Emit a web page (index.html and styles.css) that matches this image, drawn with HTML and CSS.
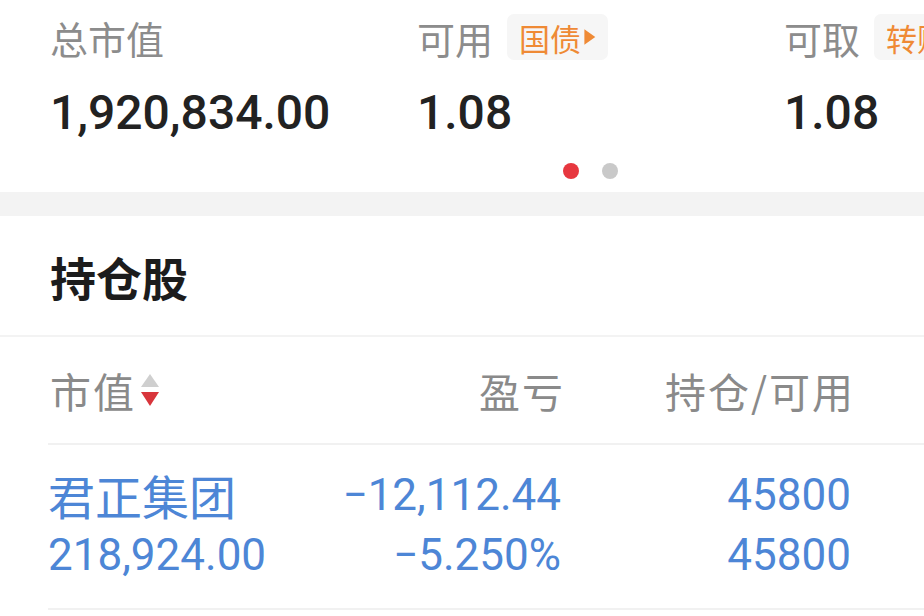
FILE: index.html
```html
<!DOCTYPE html>
<html lang="zh-CN">
<head>
  <meta charset="UTF-8" />
  <meta name="viewport" content="width=device-width, initial-scale=1.0"/>
  <title>持仓</title>
  <link rel="stylesheet" href="styles.css">
</head>
<body>
  <section class="summary">
    <div class="summary-track">
      <div class="summary-item">
        <div class="summary-label"><span>总市值</span></div>
        <div class="summary-value">1,920,834.00</div>
      </div>
      <div class="summary-item">
        <div class="summary-label">
          <span>可用</span>
          <span class="tag">国债<svg class="tag-arrow" viewBox="0 0 10 14" width="13" height="18"><path d="M1 1 L9.5 7 L1 13 Z" fill="#ef8a35"/></svg></span>
        </div>
        <div class="summary-value">1.08</div>
      </div>
      <div class="summary-item">
        <div class="summary-label">
          <span>可取</span>
          <span class="tag">转账<svg class="tag-arrow" viewBox="0 0 10 14" width="13" height="18"><path d="M1 1 L9.5 7 L1 13 Z" fill="#ef8a35"/></svg></span>
        </div>
        <div class="summary-value">1.08</div>
      </div>
    </div>
    <div class="pager">
      <span class="dot on"></span>
      <span class="dot"></span>
    </div>
  </section>

  <div class="band"></div>

  <section class="holdings">
    <h2 class="holdings-title">持仓股</h2>

    <div class="grid head">
      <div class="cell left">市值
        <svg class="sort" viewBox="0 0 20 40" width="20" height="40">
          <path d="M10 4 L19 17 L1 17 Z" fill="#cfcfcf"/>
          <path d="M1 22 L19 22 L10 36 Z" fill="#d8353b"/>
        </svg>
      </div>
      <div class="cell">盈亏</div>
      <div class="cell">持仓/可用</div>
    </div>

    <div class="grid row">
      <div class="cell left">
        <div class="name">君正集团</div>
        <div class="num">218,924.00</div>
      </div>
      <div class="cell">
        <div class="num">−12,112.44</div>
        <div class="num">−5.250%</div>
      </div>
      <div class="cell">
        <div class="num">45800</div>
        <div class="num">45800</div>
      </div>
    </div>
  </section>
</body>
</html>
```

FILE: styles.css
```css
body { margin: 0; background: #fff; font-family: Roboto, "Noto Sans CJK SC", sans-serif; overflow: hidden; }

.summary { height: 192px; overflow: hidden; }
.summary-track { display: flex; padding: 14px 0 0 50px; white-space: nowrap; }
.summary-item { flex: 0 0 367px; }
.summary-label { display: flex; align-items: center; height: 46px; font-family: "Noto Sans CJK SC", sans-serif; font-size: 38px; color: #8c8c8c; }
.tag { display: flex; align-items: center; height: 46px; margin-left: 14px; padding: 0 12px 0 12px; background: #f6f6f6; border-radius: 7px; font-size: 31px; color: #ef8a35; }
.tag-arrow { margin-left: 2px; }
.summary-value { margin-top: 24px; font-size: 48px; font-weight: 500; line-height: 58px; color: #222; }

.pager { display: flex; gap: 23px; padding: 21px 0 0 563px; }
.dot { width: 16px; height: 16px; border-radius: 50%; background: #c9c9c9; }
.dot.on { background: #e7373f; }

.band { height: 24px; background: #f3f3f3; }

.holdings-title { margin: 0; height: 119px; display: flex; align-items: center; padding-left: 50px; border-bottom: 2px solid #f3f3f3; font-family: "Noto Sans CJK SC", sans-serif; font-size: 46px; font-weight: bold; color: #1c1c1c; }

.grid { display: grid; grid-template-columns: 233px 280px 290px; margin-left: 48px; padding-left: 2px; border-bottom: 2px solid #f1f1f1; }
.cell { text-align: right; }
.cell.left { text-align: left; }

.head { height: 106px; align-items: center; font-family: "Noto Sans CJK SC", sans-serif; font-size: 41px; letter-spacing: 2px; color: #8a8a8a; }
.head .cell { margin-right: -2px; }
.head .left { display: flex; align-items: center; margin-right: 0; }
.sort { margin-left: 4px; }

.row { padding: 20px 0 23px; color: #4d86d6; font-size: 44px; line-height: 60px; }
.name { font-family: "Noto Sans CJK SC", sans-serif; font-size: 47px; }
```
